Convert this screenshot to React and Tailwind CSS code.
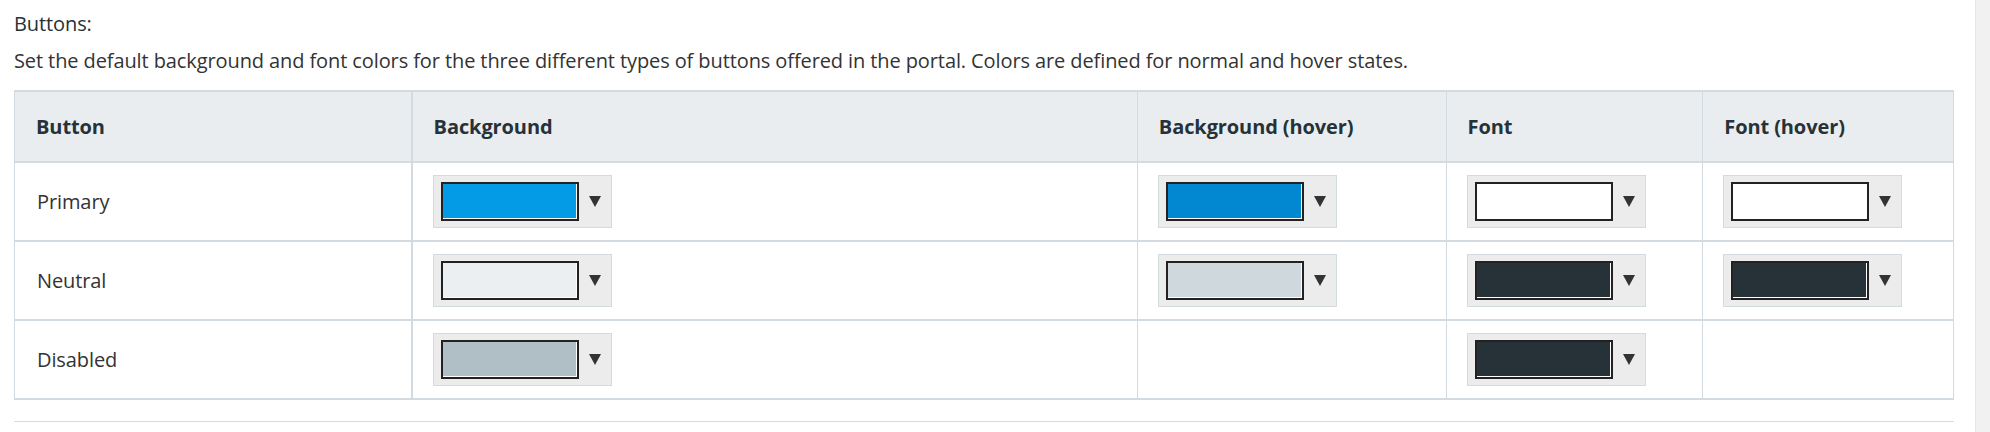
import React from "react";

const columns = ["Button", "Background", "Background (hover)", "Font", "Font (hover)"];

const rows = [
  { name: "Primary", colors: ["#039be5", "#0288d1", "#ffffff", "#ffffff"] },
  { name: "Neutral", colors: ["#eceff1", "#cfd8dc", "#263238", "#263238"] },
  { name: "Disabled", colors: ["#b0bec5", null, "#263238", null] },
];

const colClasses = [
  "w-[398px] border-r-2",
  "w-[726px] border-r",
  "w-[309px] border-r",
  "w-[257px] border-r",
  "w-[250px]",
];

const ColorPicker = ({ color }) => (
  <div className="flex items-center w-[179px] h-[53px] bg-[#ececec] border border-[#d3dbde] pl-[7px]">
    <div
      className="w-[138px] h-[39px] border-2 border-[#222] shadow-[inset_-1px_-1px_0_#ffffff]"
      style={{ backgroundColor: color }}
    />
    <div className="flex-1 flex justify-center">
      <svg width="12" height="11" viewBox="0 0 12 11">
        <polygon points="0,0 12,0 6,11" fill="#333" />
      </svg>
    </div>
  </div>
);

const App = () => {
  return (
    <div
      className="flex w-[1990px] h-[432px] bg-white overflow-hidden"
      style={{ fontFamily: '"Open Sans", "Noto Sans", sans-serif' }}
    >
      <div className="flex-1 pl-[14px] pr-[21px] pt-[10px] text-[20px] text-[#333] tracking-[-0.1px]">
        <div className="h-[28px] leading-[28px] text-[#263238]">Buttons:</div>
        <div className="mt-[9px] h-[28px] leading-[28px]">
          Set the default background and font colors for the three different types of buttons offered in the portal. Colors are defined for normal and hover states.
        </div>

        <div className="mt-[15px] w-[1940px] border-t-2 border-x border-[#d3dbe0]">
          <div className="flex h-[71px] bg-[#e9edf0] border-b-2 border-[#d3dbe0]">
            {columns.map((col, i) => (
              <div
                key={col}
                className={`${colClasses[i]} border-[#d3dbe0] flex items-center pl-[21px] font-bold text-[#263238]`}
              >
                {col}
              </div>
            ))}
          </div>
          {rows.map((row) => (
            <div key={row.name} className="flex h-[79px] border-b-2 border-[#d3dbe0]">
              <div className={`${colClasses[0]} border-[#d3dbe0] flex items-center pl-[22px]`}>
                {row.name}
              </div>
              {row.colors.map((c, i) => (
                <div
                  key={i}
                  className={`${colClasses[i + 1]} border-[#d3dbe0] flex items-center pl-[20px]`}
                >
                  {c && <ColorPicker color={c} />}
                </div>
              ))}
            </div>
          ))}
        </div>

        <div className="mt-[21px] w-[1940px] border-t border-[#d3dbe0]" />
      </div>
      <div className="w-[15px] h-full bg-[#f1f1f1] border-l border-[#e6e6e6]" />
    </div>
  );
};

export default App;
